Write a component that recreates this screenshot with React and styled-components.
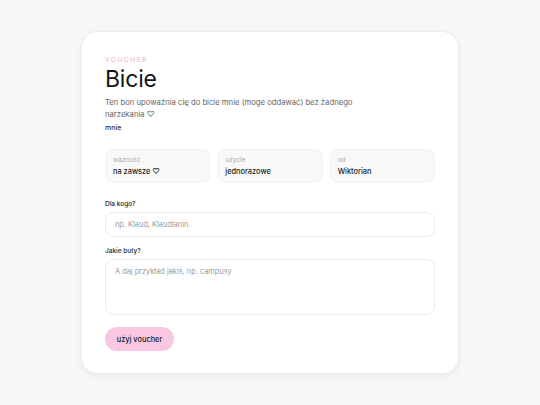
import React from "react";
import styled, { createGlobalStyle } from "styled-components";

const GlobalStyle = createGlobalStyle`
  html, body {
    margin: 0;
    padding: 0;
    background: #f7f7f7;
    font-family: Inter, "Noto Sans", sans-serif;
    color: #111;
  }
  * { box-sizing: border-box; }
`;

const Page = styled.div`
  width: 540px;
  height: 405px;
  display: flex;
  justify-content: center;
  padding-top: 31px;
`;

const Card = styled.div`
  width: 378px;
  height: 343px;
  background: #fff;
  border: 1px solid #ececec;
  border-radius: 16px;
  box-shadow: 0 2px 6px rgba(0, 0, 0, 0.06);
  padding: 24px 23px 0 23px;
  display: flex;
  flex-direction: column;
`;

const Eyebrow = styled.div`
  font-size: 6.5px;
  letter-spacing: 1.6px;
  color: #f1a7d0;
  text-transform: uppercase;
  line-height: 8px;
`;

const Title = styled.h1`
  margin: 1px 0 0;
  font-size: 23px;
  font-weight: 400;
  line-height: 28px;
  letter-spacing: -0.2px;
  color: #151515;
`;

const Description = styled.p`
  margin: 4px 0 0;
  font-size: 7.7px;
  line-height: 12px;
  color: #666;
  width: 262px;
`;

const From = styled.div`
  margin-top: 2px;
  font-size: 7px;
  font-weight: 500;
  line-height: 9px;
  color: #333;
`;

const Stats = styled.div`
  margin-top: 17px;
  display: grid;
  grid-template-columns: repeat(3, 1fr);
  gap: 7px;
`;

const Stat = styled.div`
  height: 34px;
  background: #f8f8f8;
  border: 1px solid #f3f3f3;
  border-radius: 8px;
  padding: 6px 7px;
  display: flex;
  flex-direction: column;
  gap: 3px;
`;

const StatLabel = styled.span`
  font-size: 6.5px;
  color: #aaa;
  line-height: 8px;
`;

const StatValue = styled.span`
  font-size: 7.4px;
  font-weight: 500;
  color: #222;
  line-height: 10px;
`;

const Field = styled.label`
  display: flex;
  flex-direction: column;
  gap: 4px;
  margin-top: ${(p) => p.$top}px;
`;

const FieldLabel = styled.span`
  font-size: 6.5px;
  font-weight: 500;
  color: #222;
  line-height: 8px;
`;

const Input = styled.input`
  height: 25px;
  border: 1px solid #ececec;
  border-radius: 8px;
  padding: 0 9px;
  font-family: inherit;
  font-size: 7.4px;
  color: #222;
  outline: none;
  &::placeholder { color: #9a9a9a; }
`;

const TextArea = styled.textarea`
  height: 56px;
  border: 1px solid #ececec;
  border-radius: 8px;
  padding: 7px 9px;
  font-family: inherit;
  font-size: 7.4px;
  color: #222;
  resize: none;
  outline: none;
  &::placeholder { color: #9a9a9a; }
`;

const Button = styled.button`
  margin-top: 12px;
  align-self: flex-start;
  height: 24px;
  width: 69px;
  border: none;
  border-radius: 999px;
  background: #f8c8e3;
  font-family: inherit;
  font-size: 7.4px;
  font-weight: 500;
  color: #222;
  cursor: pointer;
`;

const stats = [
  { label: "ważność", value: "na zawsze \u2661" },
  { label: "użycie", value: "jednorazowe" },
  { label: "od", value: "Wiktorian" },
];

export default function App() {
  return (
    <>
      <GlobalStyle />
      <Page>
        <Card>
          <Eyebrow>Voucher</Eyebrow>
          <Title>Bicie</Title>
          <Description>
            Ten bon upoważnia cię do bicie mnie (moge oddawać) bez żadnego
            narzekania {"\u2661"}
          </Description>
          <From>mnie</From>
          <Stats>
            {stats.map((s) => (
              <Stat key={s.label}>
                <StatLabel>{s.label}</StatLabel>
                <StatValue>{s.value}</StatValue>
              </Stat>
            ))}
          </Stats>
          <Field $top={17}>
            <FieldLabel>Dla kogo?</FieldLabel>
            <Input placeholder="np. Klaud, Klaudianin." />
          </Field>
          <Field $top={10}>
            <FieldLabel>Jakie buty?</FieldLabel>
            <TextArea placeholder="A daj przykład jakiś, np. campusy" />
          </Field>
          <Button>użyj voucher</Button>
        </Card>
      </Page>
    </>
  );
}
